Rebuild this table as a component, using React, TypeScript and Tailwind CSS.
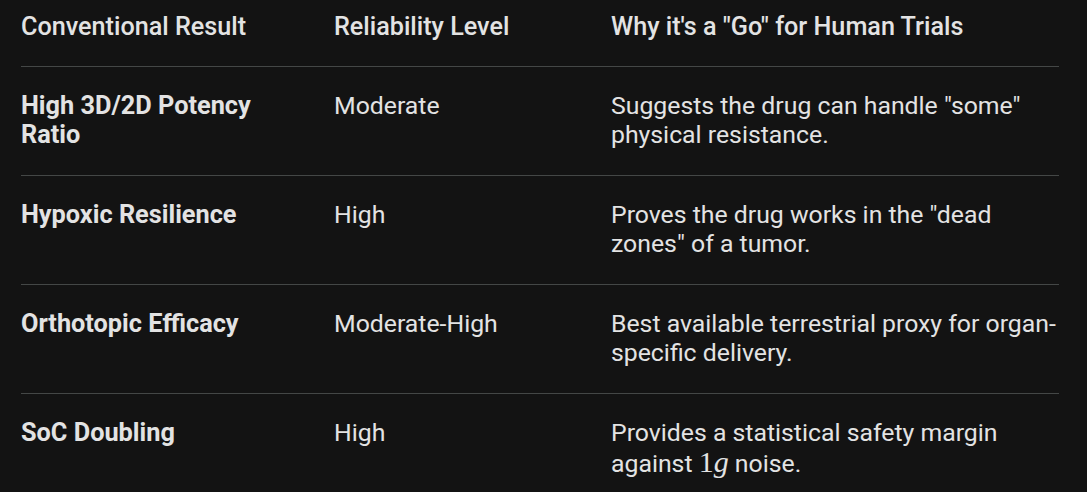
type Row = {
    result: string;
    level: string;
    why: React.ReactNode;
};

const rows: Row[] = [
    {
        result: 'High 3D/2D Potency Ratio',
        level: 'Moderate',
        why: 'Suggests the drug can handle "some" physical resistance.',
    },
    {
        result: 'Hypoxic Resilience',
        level: 'High',
        why: 'Proves the drug works in the "dead zones" of a tumor.',
    },
    {
        result: 'Orthotopic Efficacy',
        level: 'Moderate-High',
        why: 'Best available terrestrial proxy for organ-specific delivery.',
    },
    {
        result: 'SoC Doubling',
        level: 'High',
        why: (
            <>
                Provides a statistical safety margin against{' '}
                <span className="font-['Liberation_Serif',serif] text-[1.21em] leading-none">
                    1<i>g</i>
                </span>{' '}
                noise.
            </>
        ),
    },
];

export default function App() {
    return (
        <div className="h-[492px] w-[1087px] overflow-hidden bg-[#131313] font-['Roboto',sans-serif] text-[24.8px] leading-[29px] text-[#e3e3e3]">
            <div className="ml-[21px] w-[1038px]">
                <div className="grid grid-cols-[313px_277px_448px] border-b border-[#444746] pt-[12px] pb-[25px] text-[25.2px] font-medium">
                    <div>Conventional Result</div>
                    <div>Reliability Level</div>
                    <div className="w-[450px]">Why it's a "Go" for Human Trials</div>
                </div>
                {rows.map((row, i) => (
                    <div
                        key={row.result}
                        className={`grid grid-cols-[313px_277px_448px] pt-[24px] pb-[26px] ${
                            i < rows.length - 1 ? 'border-b border-[#444746]' : ''
                        }`}
                    >
                        <div className="pr-6 text-[25.3px] font-bold">{row.result}</div>
                        <div>{row.level}</div>
                        <div className="w-[450px]">{row.why}</div>
                    </div>
                ))}
            </div>
        </div>
    );
}
